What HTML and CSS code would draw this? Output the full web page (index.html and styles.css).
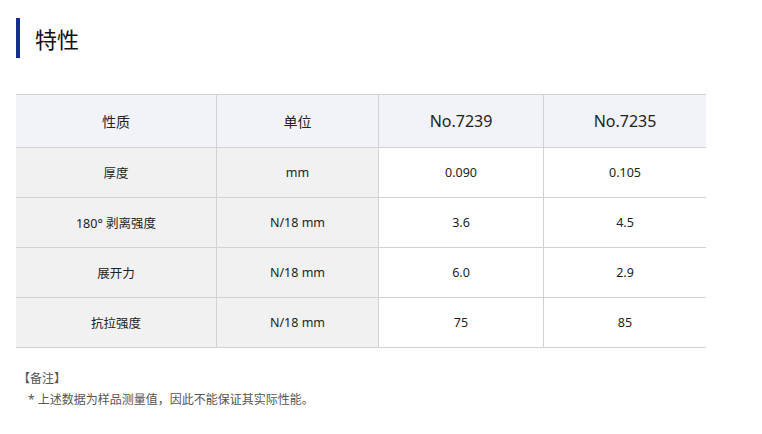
FILE: index.html
```html
<!DOCTYPE html>
<html lang="zh-CN">
<head>
<meta charset="utf-8">
<link rel="stylesheet" href="styles.css">
</head>
<body>
<div class="page">
  <h2 class="title">特性</h2>
  <table class="spec">
    <thead>
      <tr>
        <th class="c1">性质</th>
        <th class="c2">单位</th>
        <th class="c3 en">No.7239</th>
        <th class="c4 en">No.7235</th>
      </tr>
    </thead>
    <tbody>
      <tr><td class="lbl">厚度</td><td class="lbl">mm</td><td>0.090</td><td>0.105</td></tr>
      <tr><td class="lbl">180° 剥离强度</td><td class="lbl">N/18 mm</td><td>3.6</td><td>4.5</td></tr>
      <tr><td class="lbl">展开力</td><td class="lbl">N/18 mm</td><td>6.0</td><td>2.9</td></tr>
      <tr><td class="lbl">抗拉强度</td><td class="lbl">N/18 mm</td><td>75</td><td>85</td></tr>
    </tbody>
  </table>
  <div class="notes">
    <p class="note-head">【备注】</p>
    <p class="note-line">* 上述数据为样品测量值，因此不能保证其实际性能。</p>
  </div>
</div>
</body>
</html>
```

FILE: styles.css
```css
html, body {
  margin: 0;
  padding: 0;
  background: #fff;
}
body {
  font-family: "Noto Sans", "Noto Sans CJK SC", sans-serif;
  color: #222;
}
.page {
  padding: 18px 0 0 16px;
}
.title {
  margin: 0;
  height: 40px;
  line-height: 40px;
  border-left: 4px solid #12308c;
  padding-left: 15px;
  font-size: 22px;
  font-weight: normal;
  color: #111;
  font-family: "Noto Sans CJK SC", sans-serif;
}
.spec {
  margin-top: 36px;
  width: 687px;
  border-collapse: collapse;
  table-layout: fixed;
}
.spec th, .spec td {
  border-top: 1px solid #d2d2d2;
  border-bottom: 1px solid #d2d2d2;
  border-left: 1px solid #d2d2d2;
  text-align: center;
  padding: 0;
  font-weight: normal;
}
.spec th:first-child, .spec td:first-child {
  border-left: none;
}
.spec th {
  height: 52px;
  background: #f2f3f8;
  font-size: 14px;
  color: #222;
}
.spec th.en {
  font-size: 16px;
}
.spec td {
  height: 49px;
  font-size: 12.5px;
  color: #222;
}
.spec td.lbl {
  background: #f1f1f1;
}
.c1 { width: 200px; }
.c2 { width: 161px; }
.c3 { width: 164px; }
.c4 { width: 162px; }
.notes {
  margin-top: 20px;
  padding-left: 2px;
  font-size: 12px;
  color: #555;
}
.notes p {
  margin: 0;
  line-height: 21px;
}
.note-line {
  padding-left: 10px;
}
```
